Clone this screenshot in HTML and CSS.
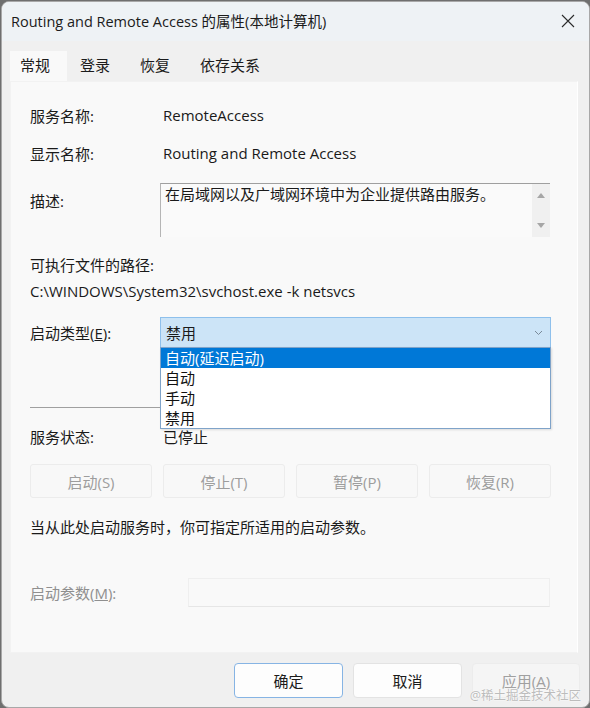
FILE: index.html
```html
<!DOCTYPE html>
<html lang="zh-CN">
<head>
<meta charset="utf-8">
<title>Routing and Remote Access 的属性(本地计算机)</title>
<link rel="stylesheet" href="styles.css">
</head>
<body>
<div class="window">
  <div class="titlebar">
    <div class="title">Routing and Remote Access 的属性(本地计算机)</div>
    <div class="close">
      <svg width="14" height="14" viewBox="0 0 14 14"><path d="M1 1 L13 13 M13 1 L1 13" stroke="#2b2b2b" stroke-width="1.1" fill="none"/></svg>
    </div>
  </div>
  <div class="body">
    <div class="tabs">
      <div class="tab active">常规</div>
      <div class="tab">登录</div>
      <div class="tab">恢复</div>
      <div class="tab">依存关系</div>
    </div>
    <div class="panel">
      <div class="row r1"><div class="label">服务名称:</div><div class="value">RemoteAccess</div></div>
      <div class="row r2"><div class="label">显示名称:</div><div class="value">Routing and Remote Access</div></div>
      <div class="row r3">
        <div class="label desc-label">描述:</div>
        <div class="textarea">
          <div class="ta-text">在局域网以及广域网环境中为企业提供路由服务。</div>
          <div class="ta-scroll">
            <svg width="8" height="6" viewBox="0 0 8 6"><path d="M0 6 L4 1 L8 6 Z" fill="#a6a6a6"/></svg>
            <svg width="8" height="6" viewBox="0 0 8 6"><path d="M0 0 L4 5 L8 0 Z" fill="#a6a6a6"/></svg>
          </div>
        </div>
      </div>
      <div class="line r4">可执行文件的路径:</div>
      <div class="line r5">C:\WINDOWS\System32\svchost.exe -k netsvcs</div>
      <div class="row r6">
        <div class="label">启动类型(<u>E</u>):</div>
        <div class="combo">
          <span class="combo-text">禁用</span>
          <svg class="chev" width="9" height="6" viewBox="0 0 9 6"><path d="M1 1 L4.5 4.5 L8 1" stroke="#7a8a99" stroke-width="1" fill="none"/></svg>
          <div class="dropdown">
            <div class="opt sel">自动(延迟启动)</div>
            <div class="opt">自动</div>
            <div class="opt">手动</div>
            <div class="opt">禁用</div>
          </div>
        </div>
      </div>
      <div class="sep"></div>
      <div class="row r7"><div class="label">服务状态:</div><div class="value">已停止</div></div>
      <div class="btns">
        <div class="btn dis">启动(S)</div>
        <div class="btn dis">停止(T)</div>
        <div class="btn dis">暂停(P)</div>
        <div class="btn dis">恢复(R)</div>
      </div>
      <div class="line r8">当从此处启动服务时，你可指定所适用的启动参数。</div>
      <div class="row r9">
        <div class="label param-label">启动参数(<u>M</u>):</div>
        <div class="input"></div>
      </div>
    </div>
    <div class="footer">
      <div class="fbtn default">确定</div>
      <div class="fbtn">取消</div>
      <div class="fbtn disabled">应用(<u>A</u>)</div>
    </div>
    <div class="watermark">@稀土掘金技术社区</div>
  </div>
</div>
</body>
</html>
```
FILE: styles.css
```css
* { box-sizing: border-box; }
html, body { margin: 0; padding: 0; }
body {
  width: 590px;
  height: 708px;
  background: #6f6f6f;
  font-family: "Open Sans", "Noto Sans CJK SC", sans-serif;
  font-size: 15px;
  color: #1a1a1a;
  overflow: hidden;
}
.window {
  width: 589px;
  height: 707px;
  margin: 1px 0 0 1px;
  border: 1px solid #a8a8a8;
  border-radius: 8px;
  overflow: hidden;
  background: #f0f0f0;
  display: flex;
  flex-direction: column;
}
.titlebar {
  height: 39px;
  flex: none;
  background: #eef2f5;
  display: flex;
  align-items: center;
  justify-content: space-between;
  padding: 0 14px 0 9px;
}
.title {
  font-size: 14.5px;
  color: #1b1b1b;
  padding-bottom: 2px;
}
.close { display: flex; align-items: center; padding-bottom: 2px; }
.body {
  flex: 1;
  position: relative;
  padding: 0 11px 0 8px;
  display: flex;
  flex-direction: column;
}
.tabs {
  height: 40px;
  display: flex;
  align-items: flex-end;
}
.tab {
  height: 30px;
  line-height: 28px;
  font-size: 15px;
  width: 60px;
  padding-left: 13px;
  color: #1b1b1b;
  white-space: nowrap;
}
.tab.active {
  background: #f9f9f9;
  width: 57px;
  padding-left: 10px;
}
.panel {
  height: 572px;
  background: #f9f9f9;
  border: 1px solid #f2f2f2;
  border-right: 1px solid #ffffff;
  padding: 21px 25px 0 19px;
  display: flex;
  flex-direction: column;
}
.row { display: flex; align-items: center; }
.label { width: 133px; flex: none; font-size: 15px; }
.value { font-size: 15px; }
.r1 { height: 24px; }
.r2 { height: 24px; margin-top: 14px; }
.r3 { height: 54px; margin-top: 18px; align-items: flex-start; }
.desc-label { margin-top: 6px; line-height: 24px; }
.textarea {
  width: 390px;
  height: 54px;
  margin-left: -3px;
  border-top: 1px solid #9f9f9f;
  border-left: 1px solid #b5b5b5;
  display: flex;
  background: #fafafa;
}
.ta-text {
  flex: 1;
  padding: 0 0 0 4px;
  font-size: 15px;
  line-height: 20px;
}
.ta-scroll {
  width: 18px;
  background: #f0f0f0;
  display: flex;
  flex-direction: column;
  align-items: center;
  justify-content: space-between;
  padding: 8px 0 8px;
}
.line { height: 24px; line-height: 24px; font-size: 15px; white-space: nowrap; }
.r4 { margin-top: 16px; }
.r5 { margin-top: 2px; }
.r6 { height: 31px; margin-top: 14px; position: relative; z-index: 2; }
.combo {
  position: relative;
  width: 391px;
  height: 31px;
  margin-left: -3px;
  background: #cce4f7;
  border: 1px solid #8ec0ec;
  display: flex;
  align-items: center;
  padding-left: 5px;
}
.combo-text { flex: 1; font-size: 15px; }
.chev { margin-right: 7px; }
.dropdown {
  position: absolute;
  top: 29px;
  left: -1px;
  width: 391px;
  border: 1px solid #7fa3c9;
  background: #ffffff;
  box-shadow: 1px 1px 2px rgba(0,0,0,0.12);
}
.opt {
  height: 20px;
  line-height: 20px;
  padding-left: 4px;
  font-size: 15px;
  color: #111;
}
.opt.sel { background: #0078d7; color: #ffffff; }
.sep {
  height: 1px;
  background: #a0a0a0;
  margin-top: 59px;
  width: 521px;
}
.r7 { height: 24px; margin-top: 16px; }
.btns {
  margin-top: 16px;
  display: grid;
  grid-template-columns: repeat(4, 1fr);
  gap: 11px;
  width: 521px;
}
.btn {
  height: 34px;
  display: flex;
  align-items: center;
  justify-content: center;
  font-size: 15px;
  border: 1px solid #ececec;
  border-radius: 3px;
  background: #f8f8f8;
}
.btn.dis { color: #9d9d9d; }
.r8 { margin-top: 17px; }
.r9 { height: 29px; margin-top: 39px; }
.param-label { width: 158px; color: #8f8f8f; }
.input {
  width: 362px;
  height: 29px;
  background: #f9f9f9;
  border: 1px solid #efefef;
  border-bottom: 1px solid #e6e6e6;
}
.footer {
  flex: 1;
  display: flex;
  justify-content: flex-end;
  align-items: flex-start;
  gap: 10px;
  padding-top: 10px;
  margin-right: -2px;
}
.fbtn {
  width: 109px;
  height: 35px;
  display: flex;
  align-items: center;
  justify-content: center;
  font-size: 15px;
  background: #fdfdfd;
  border: 1px solid #e3e3e3;
  border-radius: 4px;
  color: #1b1b1b;
}
.fbtn.default { border: 1px solid #86b4e4; }
.fbtn.disabled { background: #f5f5f5; border-color: #ececec; color: #a0a0a0; width: 108px; }
.watermark {
  position: absolute;
  right: 8px;
  bottom: 3px;
  font-size: 12.5px;
  color: #bcbcbc;
  text-shadow: 0 0 2px #ffffff, 0 0 1px #ffffff;
}
```
